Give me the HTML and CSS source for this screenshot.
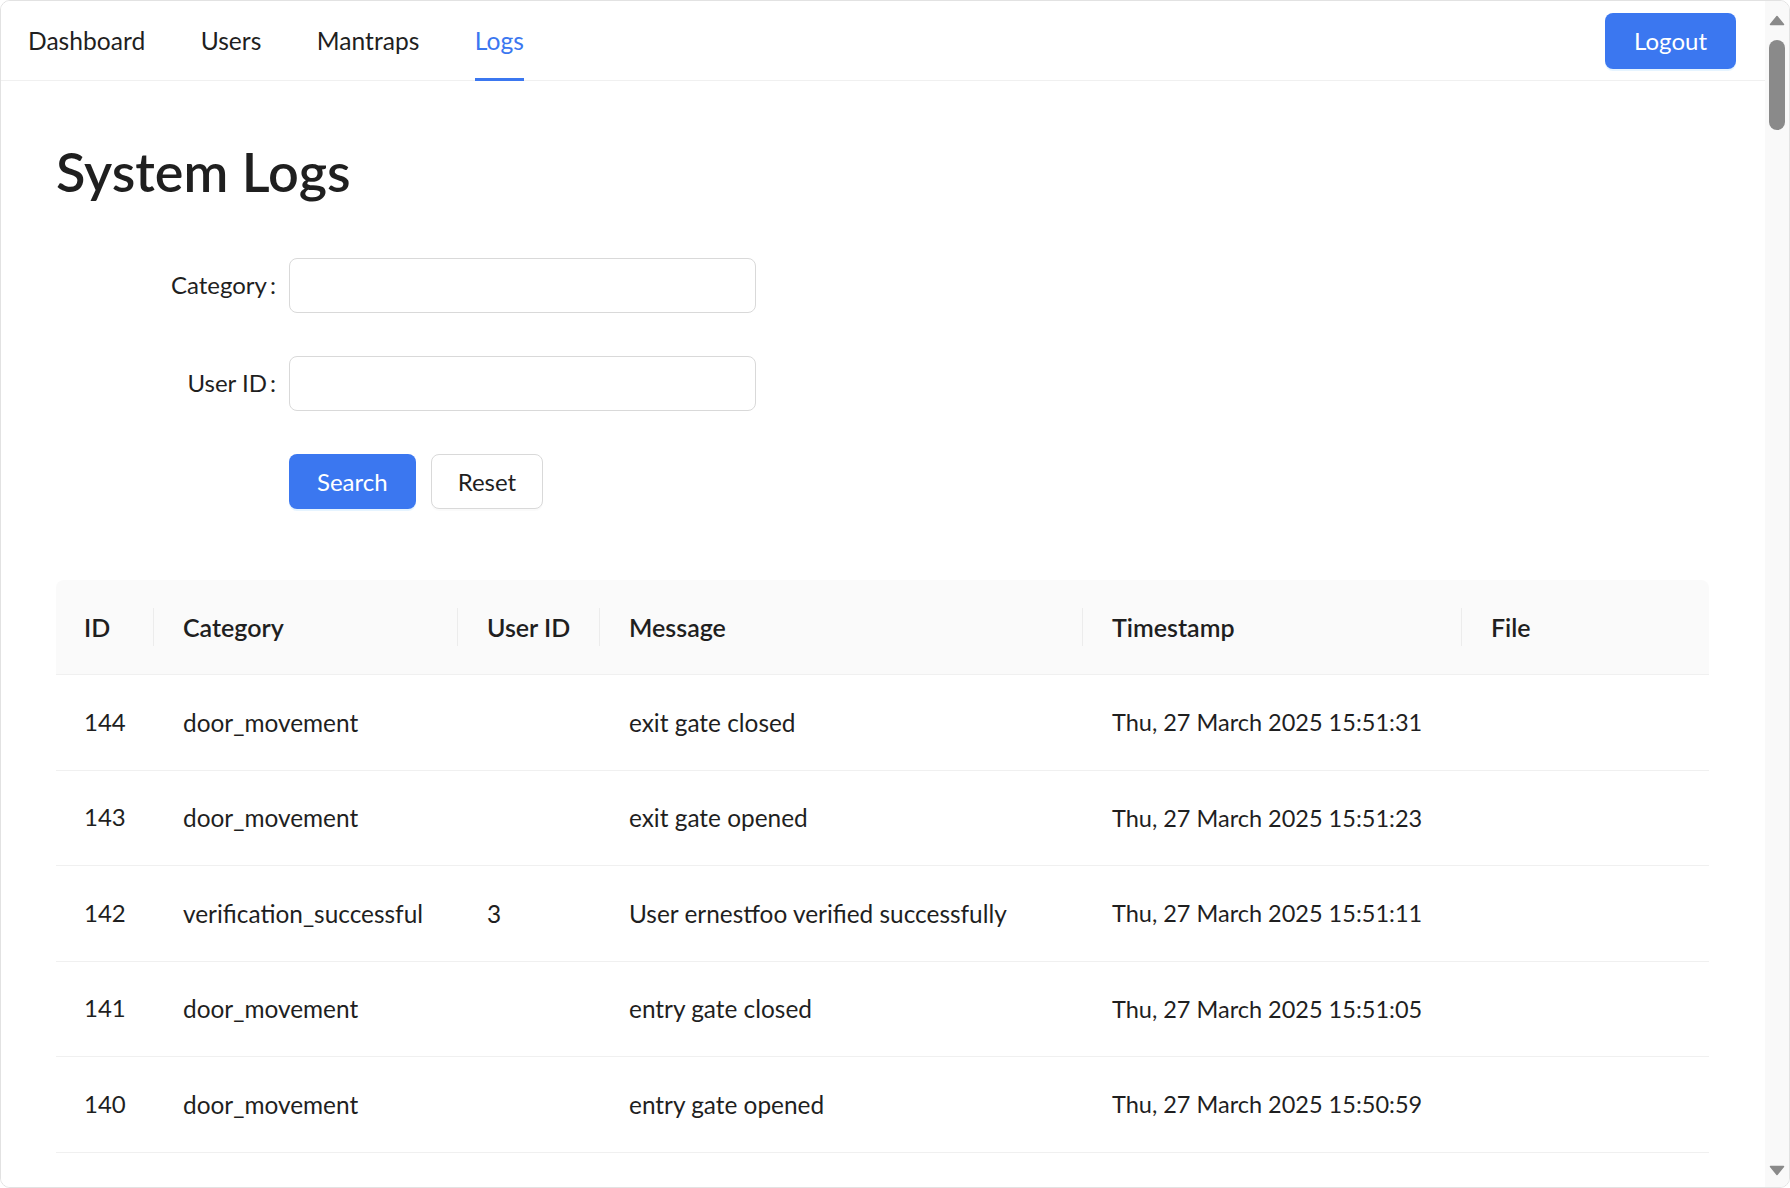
FILE: index.html
```html
<!DOCTYPE html>
<html lang="en">
<head>
<meta charset="utf-8">
<title>System Logs</title>
<link rel="stylesheet" href="styles.css">
</head>
<body>
<div class="window">
  <div class="page">
    <nav class="topnav">
      <ul class="menu">
        <li class="menu-item">Dashboard</li>
        <li class="menu-item">Users</li>
        <li class="menu-item">Mantraps</li>
        <li class="menu-item active">Logs</li>
      </ul>
      <button class="btn btn-primary btn-logout" type="button">Logout</button>
    </nav>
    <main class="content">
      <h1 class="title">System Logs</h1>
      <form class="filter-form">
        <div class="form-row">
          <label class="form-label" for="category">Category<span class="colon">:</span></label>
          <input class="form-input" id="category" type="text">
        </div>
        <div class="form-row">
          <label class="form-label" for="userid">User ID<span class="colon">:</span></label>
          <input class="form-input" id="userid" type="text">
        </div>
        <div class="form-row">
          <div class="form-label"></div>
          <div class="form-actions">
            <button class="btn btn-primary" type="button">Search</button>
            <button class="btn btn-default" type="button">Reset</button>
          </div>
        </div>
      </form>
      <div class="table-wrap">
        <table class="log-table">
          <colgroup>
            <col class="c-id"><col class="c-cat"><col class="c-user"><col class="c-msg"><col class="c-time"><col class="c-file">
          </colgroup>
          <thead>
            <tr><th>ID</th><th>Category</th><th>User ID</th><th>Message</th><th>Timestamp</th><th>File</th></tr>
          </thead>
          <tbody>
            <tr><td class="cell-id">144</td><td>door_movement</td><td></td><td>exit gate closed</td><td class="cell-time">Thu, 27 March 2025 15:51:31</td><td></td></tr>
            <tr><td class="cell-id">143</td><td>door_movement</td><td></td><td>exit gate opened</td><td class="cell-time">Thu, 27 March 2025 15:51:23</td><td></td></tr>
            <tr><td class="cell-id">142</td><td>verification_successful</td><td>3</td><td>User ernestfoo verified successfully</td><td class="cell-time">Thu, 27 March 2025 15:51:11</td><td></td></tr>
            <tr><td class="cell-id">141</td><td>door_movement</td><td></td><td>entry gate closed</td><td class="cell-time">Thu, 27 March 2025 15:51:05</td><td></td></tr>
            <tr><td class="cell-id">140</td><td>door_movement</td><td></td><td>entry gate opened</td><td class="cell-time">Thu, 27 March 2025 15:50:59</td><td></td></tr>
          </tbody>
        </table>
      </div>
    </main>
  </div>
  <div class="scrollbar">
    <svg class="sb-arrow sb-up" width="16" height="11" viewBox="0 0 16 11"><path d="M8 1.5 L14.5 9.5 H1.5 Z" fill="#8a8a8a" stroke="#8a8a8a" stroke-width="1.5" stroke-linejoin="round"/></svg>
    <div class="sb-thumb"></div>
    <div class="sb-track"></div>
    <svg class="sb-arrow sb-down" width="16" height="11" viewBox="0 0 16 11"><path d="M8 9.5 L14.5 1.5 H1.5 Z" fill="#8a8a8a" stroke="#8a8a8a" stroke-width="1.5" stroke-linejoin="round"/></svg>
  </div>
</div>
</body>
</html>
```
FILE: styles.css
```css
html, body {
  margin: 0;
  padding: 0;
  background: #ffffff;
}

body {
  font-family: Lato, "Noto Sans", sans-serif;
  font-size: 24px;
  color: #1f1f1f;
}

.window {
  box-sizing: border-box;
  width: 1790px;
  height: 1188px;
  border: 1px solid #e2e2e2;
  border-radius: 10px;
  overflow: hidden;
  display: flex;
}

.page {
  flex: 1;
  min-width: 0;
  background: #ffffff;
}

/* ---------- top navigation ---------- */
.topnav {
  display: flex;
  justify-content: space-between;
  align-items: stretch;
  height: 79px;
  padding: 0 29px 0 27px;
  border-bottom: 1px solid #f0f0f0;
}

.menu {
  display: flex;
  gap: 55.5px;
  list-style: none;
  margin: 0;
  padding: 0;
}

.menu-item {
  display: flex;
  align-items: center;
  height: 80px;
  font-size: 24.6px;
  line-height: 1.2;
  color: #1f1f1f;
  cursor: pointer;
}

.menu-item.active {
  color: #3b77f0;
  box-shadow: inset 0 -3px 0 #3b77f0;
}

/* ---------- buttons ---------- */
.btn {
  font-family: inherit;
  font-size: 24px;
  line-height: 1;
  height: 55px;
  padding: 0 27px;
  border-radius: 8px;
  border: 1px solid transparent;
  cursor: pointer;
}

.btn-primary {
  background: #3b77f0;
  color: #ffffff;
  box-shadow: 0 2px 0 rgba(5, 145, 255, 0.1);
}

.btn-default {
  background: #ffffff;
  color: #1f1f1f;
  border-color: #d9d9d9;
  padding: 0 26px;
  box-shadow: 0 2px 0 rgba(0, 0, 0, 0.02);
}

.btn-logout {
  align-self: center;
  height: 56px;
  padding: 0 28px;
}

/* ---------- content ---------- */
.content {
  padding: 59px 56px 0 55px;
}

.title {
  margin: 0;
  font-size: 54px;
  font-weight: 600;
  line-height: 64px;
  color: #1f1f1f;
}

.filter-form {
  margin-top: 54px;
  display: flex;
  flex-direction: column;
  gap: 43px;
}

.form-row {
  display: flex;
  align-items: center;
}

.form-label {
  box-sizing: border-box;
  width: 233px;
  padding-right: 13px;
  text-align: right;
  line-height: 1.2;
  color: #1f1f1f;
}

.colon {
  margin-left: 3px;
}

.form-input {
  box-sizing: border-box;
  width: 467px;
  height: 55px;
  padding: 0 16px;
  border: 1px solid #d9d9d9;
  border-radius: 8px;
  background: #ffffff;
  font: inherit;
  color: #1f1f1f;
  outline: none;
}

.form-actions {
  display: flex;
  gap: 15px;
}

/* ---------- table ---------- */
.table-wrap {
  margin-top: 71px;
}

.log-table {
  width: 1653px;
  table-layout: fixed;
  border-collapse: separate;
  border-spacing: 0;
}

.c-id { width: 98px; }
.c-cat { width: 304px; }
.c-user { width: 142px; }
.c-msg { width: 483px; }
.c-time { width: 379px; }
.c-file { width: 247px; }

.log-table th,
.log-table td {
  box-sizing: border-box;
  padding: 0 16px 0 29px;
  text-align: left;
  vertical-align: middle;
  line-height: 1.2;
  border-bottom: 1px solid #f0f0f0;
  white-space: nowrap;
}

.log-table th {
  height: 95px;
  font-size: 25px;
  font-weight: 600;
  color: #1f1f1f;
  background: linear-gradient(#ececec, #ececec) right center / 1px 38px no-repeat, #fafafa;
}

.log-table th:first-child {
  border-top-left-radius: 8px;
  padding-left: 28px;
}

.log-table th:last-child {
  border-top-right-radius: 8px;
  background: #fafafa;
}

.log-table td {
  height: 95.5px;
  font-size: 24.4px;
  color: #1f1f1f;
}

.log-table td.cell-id {
  padding-left: 28px;
  font-size: 24px;
}

.log-table td.cell-time {
  font-size: 23.5px;
}

/* ---------- scrollbar ---------- */
.scrollbar {
  width: 24px;
  background: #f9f9f9;
  display: flex;
  flex-direction: column;
  align-items: center;
}

.sb-arrow {
  display: block;
  flex: none;
}

.sb-up {
  margin-top: 14px;
}

.sb-thumb {
  flex: none;
  width: 16px;
  height: 90px;
  margin-top: 14px;
  border-radius: 8px;
  background: #8a8a8a;
}

.sb-track {
  flex: 1;
}

.sb-down {
  margin-bottom: 11px;
}
```
